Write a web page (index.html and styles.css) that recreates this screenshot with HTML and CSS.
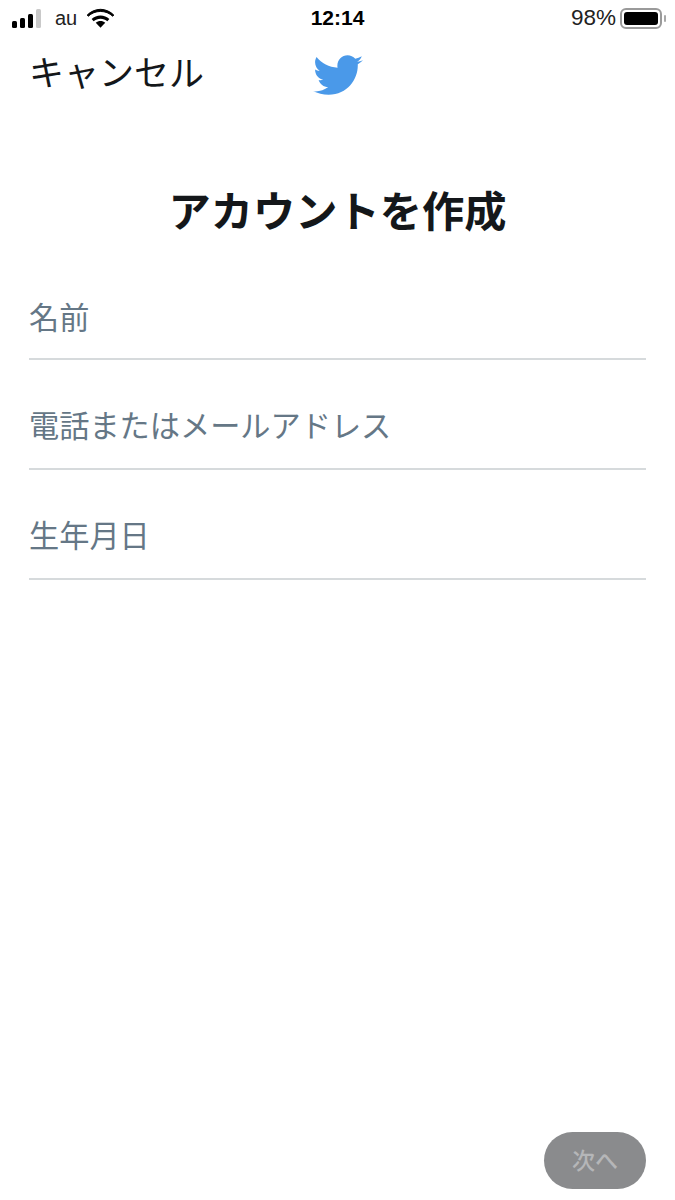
FILE: index.html
```html
<!DOCTYPE html>
<html lang="ja">

<head>
    <meta charset="UTF-8">
    <meta name="viewport" content="width=device-width, initial-scale=1.0">
    <title>アカウントを作成</title>
    <link rel="stylesheet" href="styles.css">
</head>

<body>
    <div class="page">
        <!-- iOS status bar -->
        <div class="statusBar">
            <div class="statusLeft">
                <div class="signal">
                    <span class="bar bar1"></span>
                    <span class="bar bar2"></span>
                    <span class="bar bar3"></span>
                    <span class="bar bar4"></span>
                </div>
                <span class="carrier">au</span>
                <svg class="wifi" width="28" height="20" viewBox="0 0 28 20">
                    <path d="M14 3.200c-4.900 0-9.300 1.900-12.700 5l-1-1.100-.1-.2C3.900 3.300 8.700 1 14 1s10.100 2.300 13.800 5.900l-1.100 1.300C23.300 5.100 18.900 3.200 14 3.200z" fill="#000" stroke="#000"/>
                    <path d="M14 7.500c-3.500 0-6.700 1.300-9.200 3.500l2.100 2.400c1.900-1.600 4.400-2.600 7.100-2.600s5.200 1 7.100 2.600l2.100-2.400c-2.500-2.200-5.700-3.500-9.200-3.500z" fill="#000"/>
                    <path d="M14 13c-1.900 0-3.600.7-4.900 1.800L14 20l4.900-5.200C17.600 13.700 15.900 13 14 13z" fill="#000"/>
                </svg>
            </div>
            <div class="clock">12:14</div>
            <div class="statusRight">
                <span class="percent">98%</span>
                <div class="battery"><div class="batteryFill"></div></div>
                <div class="batteryCap"></div>
            </div>
        </div>

        <div class="topBar">
            <span class="cancel">キャンセル</span>
            <svg class="bird" width="50" height="42" viewBox="0 0 24 20">
                <path d="M24 2.400c-.9.400-1.800.7-2.800.8 1-.6 1.800-1.600 2.200-2.700-1 .6-2 1-3.100 1.200C19.300.6 18 0 16.600 0c-2.700 0-4.900 2.200-4.900 4.900 0 .4 0 .8.100 1.100C7.700 5.800 4.100 3.800 1.700.9c-.4.700-.7 1.600-.7 2.500 0 1.700.9 3.200 2.200 4.100-.8 0-1.600-.2-2.200-.6v.1c0 2.400 1.700 4.400 3.900 4.800-.4.100-.8.200-1.300.2-.3 0-.6 0-.9-.1.600 2 2.400 3.400 4.600 3.400-1.700 1.300-3.800 2.100-6.100 2.100-.4 0-.8 0-1.200-.1C2.200 18.200 4.800 19 7.500 19c9.100 0 14-7.500 14-14v-.6c1-.7 1.800-1.500 2.500-2z" fill="#4a99e9"/>
            </svg>
        </div>

        <h1 class="title">アカウントを作成</h1>

        <div class="fields">
            <div class="field">名前</div>
            <div class="field">電話またはメールアドレス</div>
            <div class="field">生年月日</div>
        </div>

        <div class="footer">
            <button class="nextButton" type="button">次へ</button>
        </div>
    </div>
</body>

</html>
```

FILE: styles.css
```css
* {
    box-sizing: border-box;
}

html, body {
    margin: 0;
    padding: 0;
    background-color: #fff;
}

body {
    font-family: "Noto Sans CJK JP", "Liberation Sans", sans-serif;
}

.page {
    width: 675px;
    height: 1200px;
    display: flex;
    flex-direction: column;
    overflow: hidden;
}

.statusBar {
    height: 38px;
    padding: 0 9px 2px 12px;
    display: grid;
    grid-template-columns: 1fr auto 1fr;
    align-items: center;
    color: #000;
    font-family: "Liberation Sans", sans-serif;
}

.statusLeft {
    display: flex;
    align-items: center;
}

.signal {
    display: flex;
    align-items: flex-end;
    gap: 3px;
    height: 19px;
}

.bar {
    width: 5px;
    background-color: #000;
    border-radius: 1.500px;
}

.bar1 { height: 7px; }
.bar2 { height: 10px; }
.bar3 { height: 14px; }
.bar4 { height: 19px; background-color: #c9c9c9; }

.carrier {
    font-size: 20px;
    margin-left: 14px;
    color: #222;
}

.wifi {
    margin-left: 10px;
    width: 27px;
}

.clock {
    font-size: 21px;
    font-weight: bold;
    margin-left: -3px;
}

.statusRight {
    display: flex;
    align-items: center;
    justify-content: flex-end;
}

.percent {
    font-size: 22.500px;
    color: #222;
    margin-right: 4px;
}

.battery {
    width: 42px;
    height: 21px;
    border: 2px solid #9a9a9a;
    border-radius: 6px;
    padding: 2px;
}

.batteryFill {
    height: 100%;
    background-color: #000;
    border-radius: 3px;
}

.batteryCap {
    width: 2px;
    height: 7px;
    margin-left: 2px;
    background-color: #a8a8a8;
    border-radius: 1px;
}

.topBar {
    height: 70px;
    padding: 0 0 0 29px;
    display: flex;
    align-items: flex-start;
}

.cancel {
    font-size: 35px;
    line-height: 50px;
    color: #14171a;
    width: 284px;
    margin-top: 8px;
}

.bird {
    margin-top: 17px;
}

.title {
    margin: 70px 0 0;
    font-size: 42.250px;
    line-height: 62px;
    font-weight: 700;
    text-align: center;
    color: #14171a;
}

.fields {
    margin-top: 32px;
    padding: 0 29px;
}

.field {
    height: 110px;
    padding-top: 42px;
    font-size: 30.200px;
    line-height: 44px;
    color: #657786;
    border-bottom: 2px solid #d6dadc;
}

.field:first-child {
    height: 88px;
    padding-top: 22px;
}

.footer {
    margin-top: auto;
    padding: 0 29px 11px;
    display: flex;
    justify-content: flex-end;
}

.nextButton {
    width: 102px;
    height: 57px;
    border: none;
    border-radius: 29px;
    background-color: #8a8b8d;
    color: #b5b6b8;
    font-family: inherit;
    font-size: 23px;
    font-weight: 500;
    padding: 0 0 4px;
}
```
